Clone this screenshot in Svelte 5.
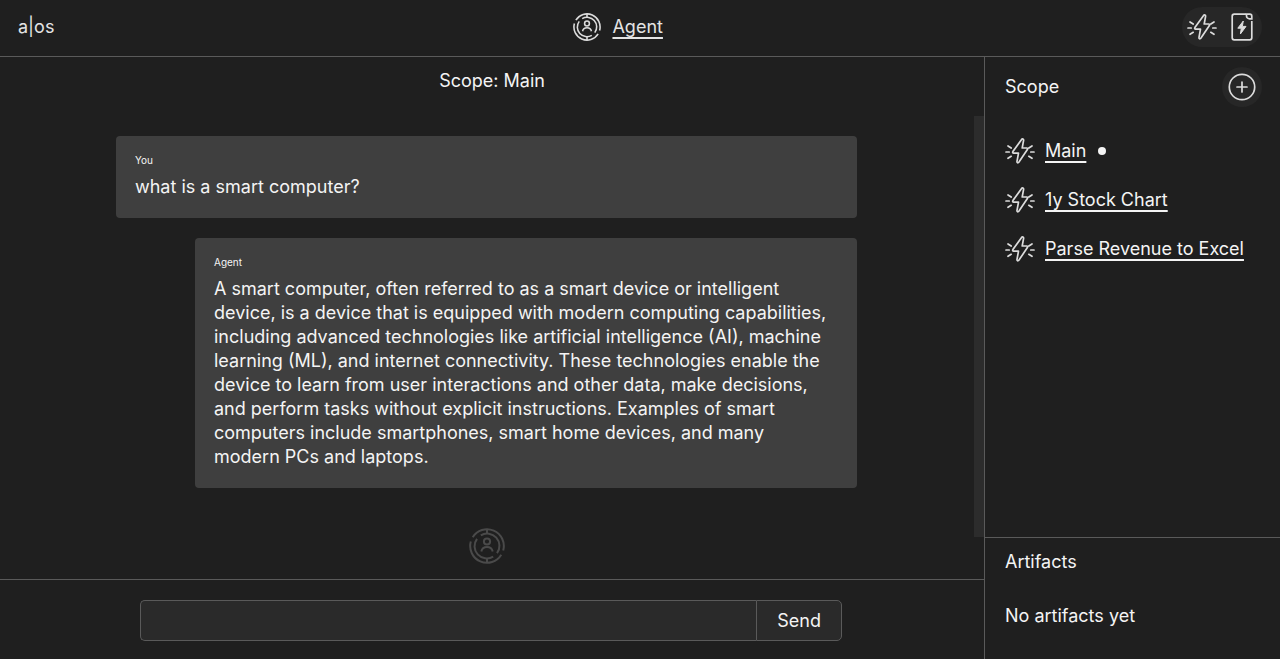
<script>
  const messages = [
    { from: 'You', text: 'what is a smart computer?' },
    {
      from: 'Agent',
      text: `A smart computer, often referred to as a smart device or intelligent
device, is a device that is equipped with modern computing capabilities,
including advanced technologies like artificial intelligence (AI), machine
learning (ML), and internet connectivity. These technologies enable the
device to learn from user interactions and other data, make decisions,
and perform tasks without explicit instructions. Examples of smart
computers include smartphones, smart home devices, and many
modern PCs and laptops.`
    }
  ];
  const scopes = ['Main', '1y Stock Chart', 'Parse Revenue to Excel'];
  let current = $state('Main');
  let draft = $state('');
</script>

{#snippet agentIcon(size)}
  <svg width={size} height={size} viewBox="0 0 36 36" fill="none" stroke="currentColor" stroke-width="2" aria-hidden="true">
    <path d="M3.700 9.200A16.800 16.800 0 0 1 34.200 22.500M32.300 26.800A16.800 16.800 0 0 1 1.800 13.500" />
    <path d="M11.800 7.300A12.300 12.300 0 0 1 28 25.200M24.200 28.700A12.300 12.300 0 0 1 8 10.800" />
    <path d="M18 1v5M18 30v5" />
    <circle cx="18" cy="13.500" r="3.100" />
    <path d="M12.300 23.500c.7-3.200 3-4.500 5.700-4.500s5 1.300 5.700 4.500" />
  </svg>
{/snippet}

{#snippet boltIcon()}
  <svg width="30" height="28" viewBox="0 0 30 28" fill="none" stroke="currentColor" stroke-width="1.700" stroke-linecap="round" stroke-linejoin="round" aria-hidden="true">
    <path d="M16.600 2.400 7.900 14.600c-.5.8-.2 1.600.7 1.600h4.900L12 24.400c-.2 1.400 1 1.800 1.800.9l8.600-12.700c.5-.8.2-1.600-.7-1.600h-4.500l1.400-7.700c.2-1.300-1.200-1.800-2-.9z" />
    <path d="M1 15h3.200M25.800 15H29M3 9l3.200 2M3 21.300l3.200-2M27 9l-3.200 2M27 21.300l-3.200-2" />
  </svg>
{/snippet}

<div class="app">
  <header>
    <span class="brand">a|os</span>
    <a class="agent" href="#agent">{@render agentIcon(28)}<span class="link">Agent</span></a>
    <div class="tools">
      <button aria-label="Scopes">{@render boltIcon()}</button>
      <button aria-label="Artifacts">
        <svg width="22" height="28" viewBox="0 0 22 28" fill="none" stroke="currentColor" stroke-width="1.700" aria-hidden="true">
          <path d="M15 1.200H3.200a2 2 0 0 0-2 2v21.600a2 2 0 0 0 2 2h15.600a2 2 0 0 0 2-2V8" />
          <path d="M15.500 1.200h3.300a2 2 0 0 1 2 2V5.800h-2.300C17 5.800 15.500 4.500 15.500 3z" />
          <path d="M12.300 8 6.800 15.200h3.500L9.400 21l5.600-7.600h-3.700z" fill="currentColor" stroke-width="1" stroke-linejoin="round" />
        </svg>
      </button>
    </div>
  </header>

  <main>
    <section class="chat">
      <h1>Scope: {current}</h1>
      <div class="thread">
        <div class="scroll">
          {#each messages as m}
            <article class:reply={m.from === 'Agent'}>
              <small>{m.from}</small>
              <p>{m.text}</p>
            </article>
          {/each}
          <div class="mark">{@render agentIcon(36)}</div>
        </div>
        <div class="bar"></div>
      </div>
      <form onsubmit={(e) => e.preventDefault()}>
        <input type="text" aria-label="Message" bind:value={draft} />
        <button type="submit">Send</button>
      </form>
    </section>

    <aside>
      <section class="scopes">
        <div class="title">
          <h2>Scope</h2>
          <button class="add" aria-label="Add scope">
            <svg width="28" height="28" viewBox="0 0 28 28" fill="none" stroke="currentColor" stroke-width="1.700" stroke-linecap="round" aria-hidden="true">
              <circle cx="14" cy="14" r="12.700" />
              <path d="M14 9v10M9 14h10" />
            </svg>
          </button>
        </div>
        <ul>
          {#each scopes as s}
            <li>
              {@render boltIcon()}
              <a class="link" href="#scope" onclick={() => (current = s)}>{s}</a>
              {#if s === current}<span class="dot"></span>{/if}
            </li>
          {/each}
        </ul>
      </section>
      <section class="artifacts">
        <h2>Artifacts</h2>
        <p>No artifacts yet</p>
      </section>
    </aside>
  </main>
</div>

<style>
  :global(body) {
    background: #1f1f1f;
  }
  .app {
    display: flex;
    flex-direction: column;
    height: 100vh;
    background: #1f1f1f;
    color: #f4f4f4;
    font: 18px/24px Inter, sans-serif;
  }
  .app * {
    box-sizing: border-box;
  }
  svg {
    display: block;
    flex: none;
    color: #dcdcdc;
  }
  h1,
  h2,
  p,
  ul {
    margin: 0;
    padding: 0;
    font-size: inherit;
    font-weight: 400;
  }
  button {
    border: 0;
    padding: 0;
    background: none;
    color: inherit;
    font: inherit;
    cursor: pointer;
  }
  header {
    display: flex;
    align-items: center;
    justify-content: space-between;
    padding: 7px 18px 9px;
    border-bottom: 1px solid #5a5a5a;
    color: #e4e4e4;
  }
  .agent {
    display: flex;
    align-items: center;
    gap: 11px;
    color: inherit;
    text-decoration: none;
  }
  .link {
    color: inherit;
    text-decoration: underline;
    text-decoration-thickness: 2px;
    text-underline-offset: 4px;
  }
  .tools {
    display: flex;
    align-items: center;
    gap: 14px;
    height: 40px;
    padding: 0 9px 0 5px;
    border-radius: 20px;
    background: #272727;
  }
  main {
    display: flex;
    flex: 1;
    min-height: 0;
  }
  .chat {
    display: flex;
    flex: 1;
    flex-direction: column;
    min-width: 0;
  }
  h1 {
    padding: 12px 0 23px;
    text-align: center;
  }
  .thread {
    display: flex;
    flex: 1;
    min-height: 0;
  }
  .scroll {
    display: flex;
    flex: 1;
    flex-direction: column;
    gap: 20px;
    min-width: 0;
    padding: 20px 117px 20px 116px;
    overflow-y: auto;
    scrollbar-width: none;
  }
  .bar {
    width: 10px;
    height: 91%;
    background: #2c2c2c;
  }
  article {
    flex: none;
    padding: 16px 19px 19px;
    border-radius: 4px;
    background: #3f3f3f;
  }
  article.reply {
    margin-left: 79px;
  }
  small {
    display: block;
    margin-bottom: 7px;
    font-size: 10px;
    line-height: 16px;
  }
  article p {
    white-space: pre-line;
  }
  .mark {
    align-self: center;
    padding: 20px 0;
  }
  .mark :global(svg) {
    color: #4a4a4a;
  }
  form {
    display: flex;
    padding: 20px 142px 18px 140px;
    border-top: 1px solid #5a5a5a;
  }
  form input,
  form button {
    height: 41px;
    border: 1px solid #5a5a5a;
    background: #2a2a2a;
    color: inherit;
    font: inherit;
  }
  form input {
    flex: 1;
    min-width: 0;
    padding: 0 12px;
    border-right: 0;
    border-radius: 5px 0 0 5px;
  }
  form button {
    padding: 0 20px;
    border-radius: 0 5px 5px 0;
  }
  aside {
    display: flex;
    flex: 0 0 296px;
    flex-direction: column;
    border-left: 1px solid #5a5a5a;
  }
  .scopes {
    flex: 1;
    padding: 10px 18px 20px 20px;
  }
  .title {
    display: flex;
    align-items: center;
    justify-content: space-between;
    margin-bottom: 30px;
  }
  .add {
    display: grid;
    place-items: center;
    width: 40px;
    height: 40px;
    border-radius: 50%;
    background: #272727;
  }
  ul {
    display: flex;
    flex-direction: column;
    gap: 21px;
    list-style: none;
  }
  li {
    display: flex;
    align-items: center;
    gap: 10px;
    white-space: nowrap;
  }
  .dot {
    width: 8px;
    height: 8px;
    margin-left: 2px;
    border-radius: 50%;
    background: #f4f4f4;
  }
  .artifacts {
    display: flex;
    flex-direction: column;
    gap: 30px;
    padding: 12px 20px 31px;
    border-top: 1px solid #5a5a5a;
  }
</style>
